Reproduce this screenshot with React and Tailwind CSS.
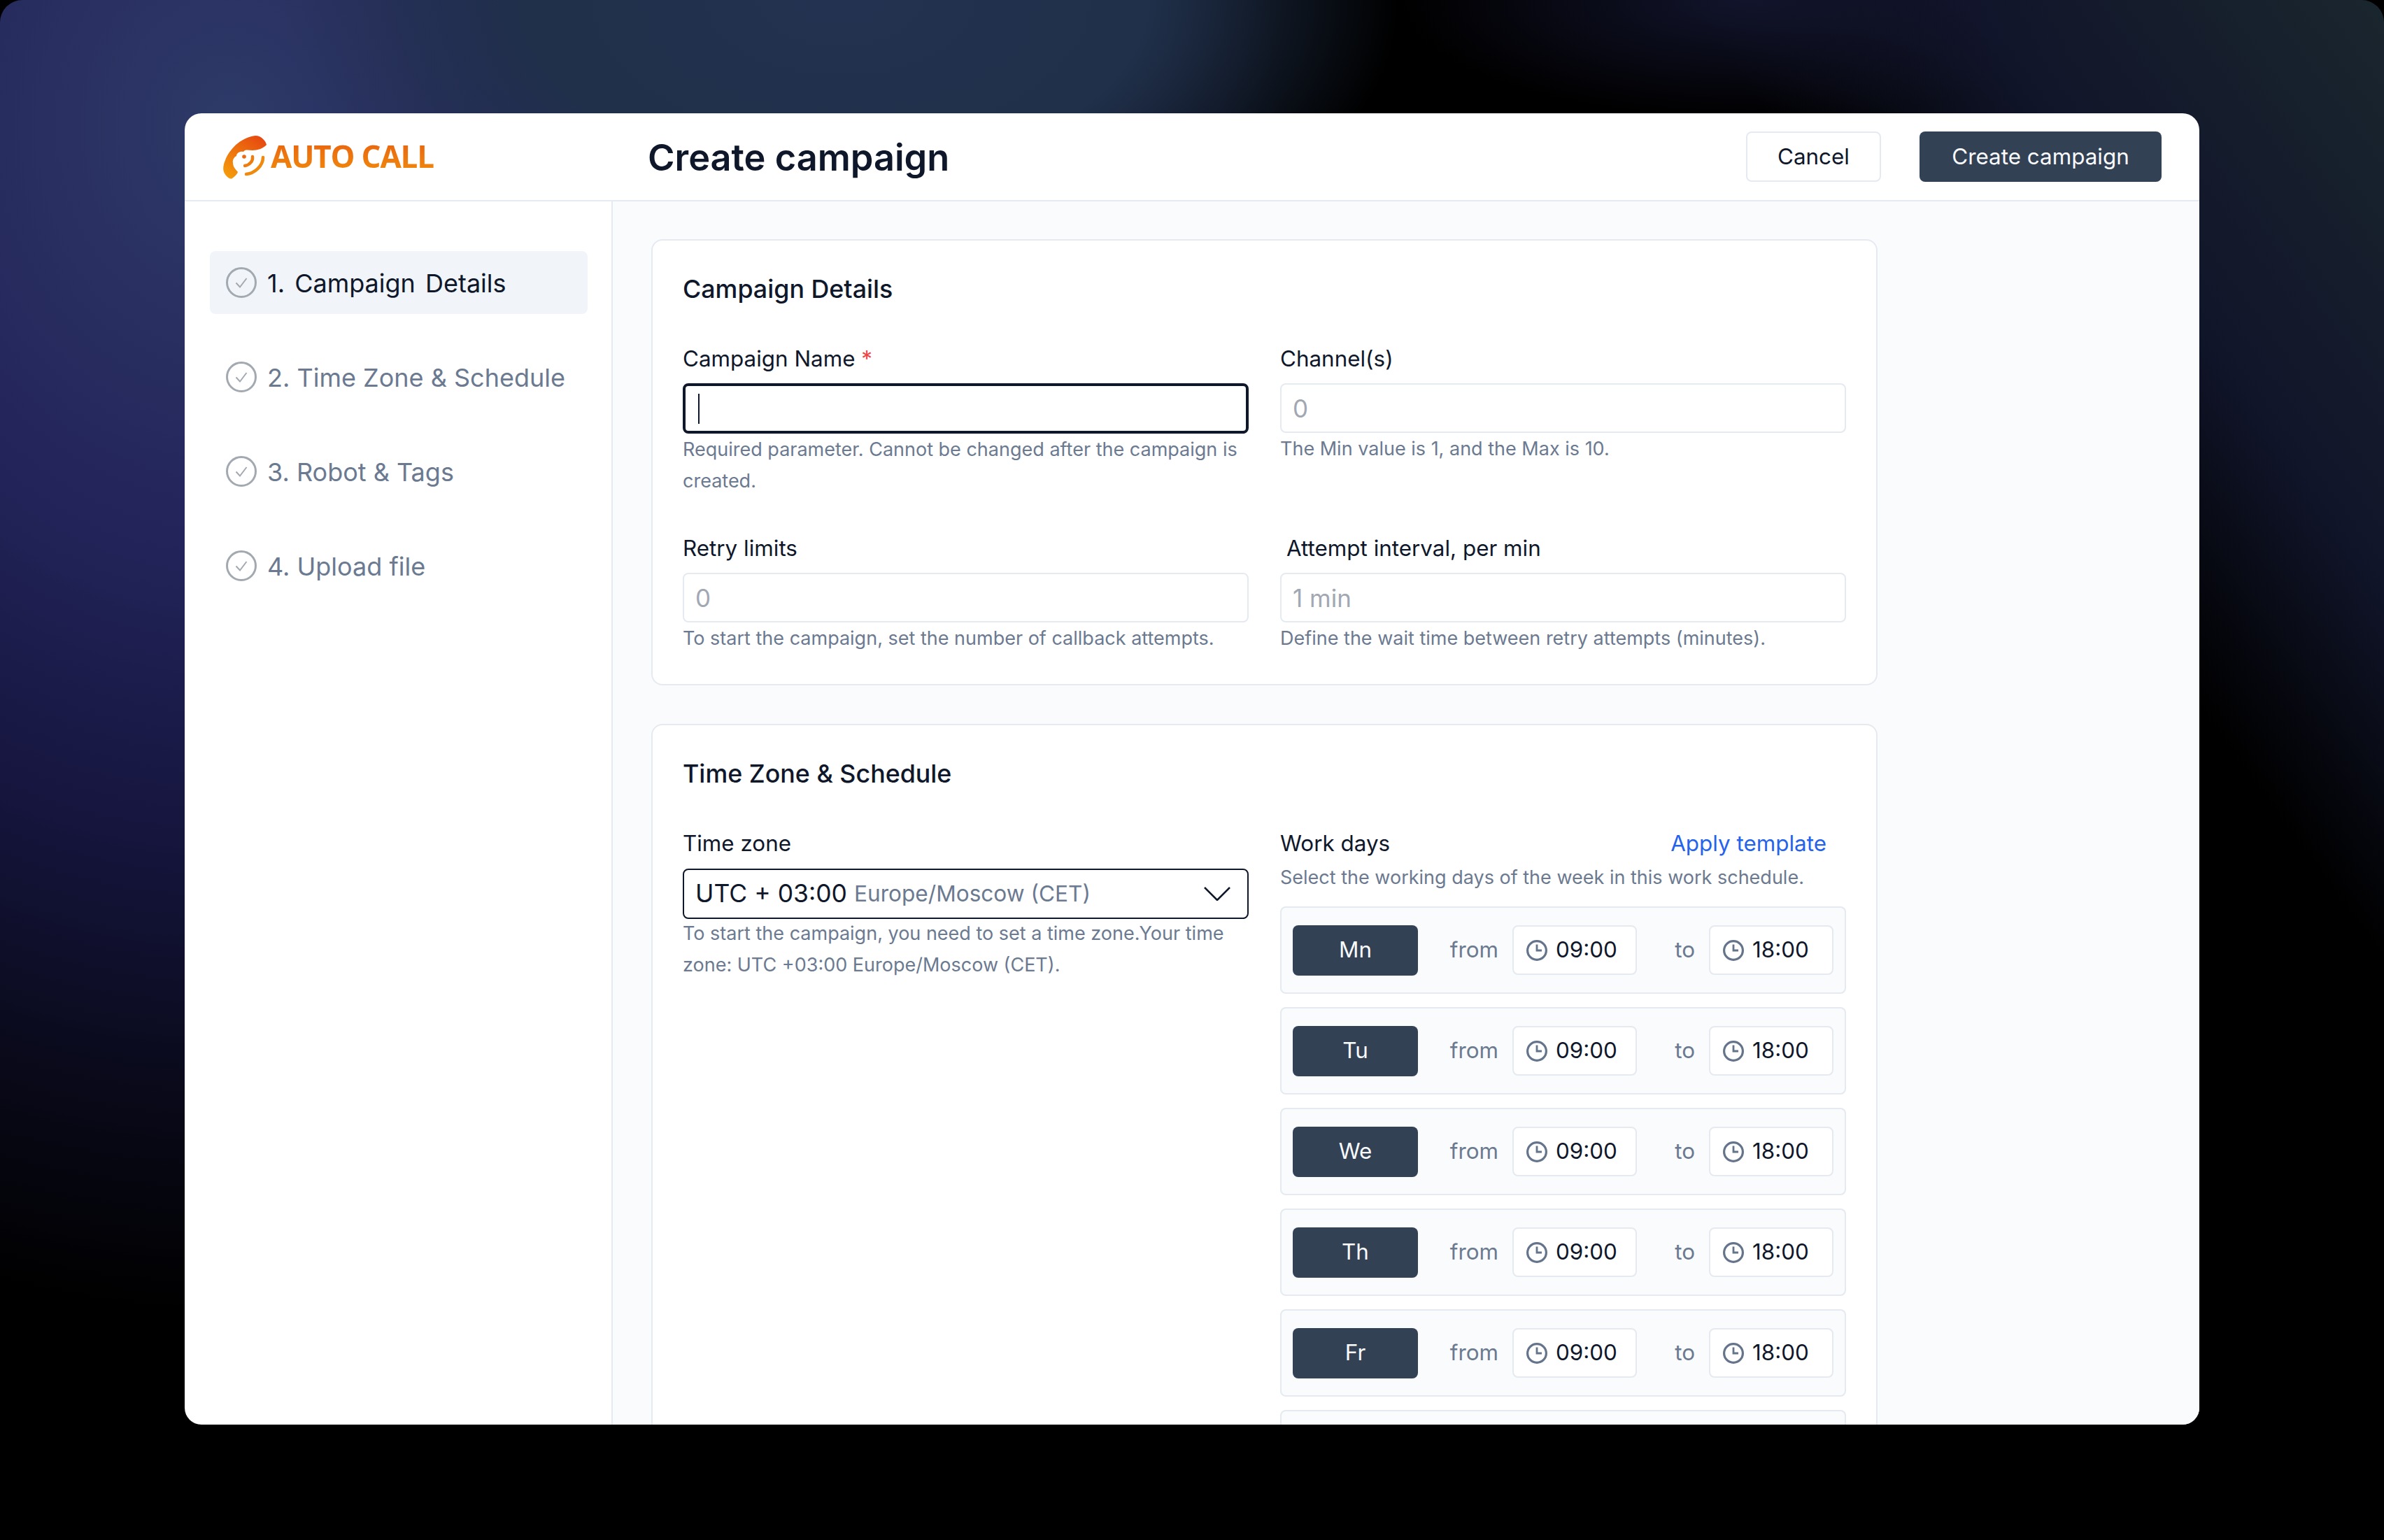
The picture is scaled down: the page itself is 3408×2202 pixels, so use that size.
const days = ['Mn', 'Tu', 'We', 'Th', 'Fr'];
const steps = ['1. Campaign Details', '2. Time Zone & Schedule', '3. Robot & Tags', '4. Upload file'];

function Logo() {
  return (
    <div className="flex items-center">
      <svg width="63" height="63" viewBox="0 0 63 63" className="shrink-0">
        <defs>
          <linearGradient id="logoGrad" x1="0.8" y1="0" x2="0.1" y2="1">
            <stop offset="0" stopColor="#e64a10" />
            <stop offset="1" stopColor="#f59e0b" />
          </linearGradient>
        </defs>
        <path
          d="M47 1C30 3 12 16 4 36C1 43 0 50 3 55C6 60 11 64 14 62C18 59 21 56 22 53C19 49 15 46 15 40C14 36 17 31 20 30C20 26 25 23 30 24C32 20 38 22 43 22C50 22 59 19 63 14C62 9 56 1 47 1Z"
          fill="url(#logoGrad)"
        />
        <circle cx="31" cy="31" r="2.8" fill="#ea6a12" />
        <path d="M43 31C44 37 39 43 32 44" fill="none" stroke="#ee7d10" strokeWidth="4.4" strokeLinecap="round" />
        <path d="M58 32C58 44 46 55 34 56" fill="none" stroke="#f08a0e" strokeWidth="4.6" strokeLinecap="round" />
      </svg>
      <span className="ml-[6px] -mt-[3px] font-[family-name:'Open_Sans',sans-serif] text-[44px] leading-[50px] font-bold tracking-[-1.2px] text-transparent bg-clip-text bg-gradient-to-b from-[#e8600f] to-[#f08a0c]">
        AUTO CALL
      </span>
    </div>
  );
}

function StepIcon() {
  return (
    <svg width="44" height="44" viewBox="0 0 44 44" fill="none" className="shrink-0">
      <circle cx="22" cy="22" r="20.5" stroke="#a3a9b1" strokeWidth="3" />
      <path d="M14.5 22.5L20 28.5L29.5 16" stroke="#a3a9b1" strokeWidth="2" />
    </svg>
  );
}

function ClockIcon() {
  return (
    <svg width="30" height="30" viewBox="0 0 30 30" fill="none" className="shrink-0">
      <circle cx="15" cy="15" r="13.4" stroke="#64748b" strokeWidth="3.2" />
      <path d="M15 6.5V15H22" stroke="#64748b" strokeWidth="2.8" />
    </svg>
  );
}

function Help({ children }) {
  return <p className="text-[27px] leading-[45px] text-[#6b7a90]">{children}</p>;
}

function Label({ children, className = '' }) {
  return <div className={`text-[31.4px] leading-[40px] text-[#0f172a] ${className}`}>{children}</div>;
}

function PlainInput({ placeholder }) {
  return (
    <div className="h-[71px] mt-[15px] rounded-[8px] border-2 border-[#e5eaf0] bg-white pl-[16px] pt-[1px] flex items-center text-[35px] text-[#a1a8b3]">
      {placeholder}
    </div>
  );
}

function TimeBox({ time }) {
  return (
    <div className="w-[178px] h-[71px] rounded-[8px] border-2 border-[#e5eaf0] bg-white pl-[18px] flex items-center gap-[12px] text-[31.4px] text-[#0f172a]">
      <ClockIcon />
      <span>{time}</span>
    </div>
  );
}

function DayRow({ day }) {
  return (
    <div className="h-[125px] shrink-0 rounded-[8px] border-2 border-[#e5eaf0] bg-[#f9fbfd] px-[16px] flex items-center text-[31.4px]">
      <div className="w-[179px] h-[72px] rounded-[8px] bg-[#334155] text-[#f8fafc] flex items-center justify-center">{day}</div>
      <div className="w-[135px] pr-[20px] text-right text-[#6b7a90]">from</div>
      <TimeBox time="09:00" />
      <div className="w-[103px] pr-[20px] text-right text-[#6b7a90]">to</div>
      <TimeBox time="18:00" />
    </div>
  );
}

export default function App() {
  return (
    <div className="w-[3408px] h-[2202px] bg-black overflow-hidden font-[family-name:Inter,sans-serif]">
      <div className="w-full h-full rounded-[32px] pt-[162px] bg-[radial-gradient(ellipse_800px_450px_at_1200px_0px,#223250_0%,#20304a_55%,transparent_100%),radial-gradient(ellipse_500px_170px_at_2500px_0px,#12142c_0%,transparent_100%),linear-gradient(54deg,transparent_80%,#11152a_88%,#1a262e_100%),radial-gradient(ellipse_1500px_1700px_at_330px_180px,#2d3a68_0%,#2a3162_15%,#23245a_35%,#15153e_60%,#0a0a1c_80%,transparent_100%)]">
        <div className="mx-auto w-[2880px] h-[1875px] rounded-[24px] overflow-hidden bg-white flex flex-col">
          {/* Header */}
          <header className="h-[126px] shrink-0 border-b-2 border-[#e5eaf0] flex items-center pr-[54px]">
            <div className="w-[662px] pl-[54px] shrink-0">
              <Logo />
            </div>
            <h1 className="pt-[3px] text-[52.3px] font-semibold text-[#0f172a] flex-1">Create campaign</h1>
            <button className="w-[193px] h-[72px] pt-[1px] rounded-[8px] border-2 border-[#e5eaf0] bg-white text-[31.4px] text-[#0f172a]">Cancel</button>
            <button className="ml-[55px] w-[346px] h-[72px] pt-[1px] rounded-[8px] bg-[#334155] text-[31.4px] text-[#f8fafc]">Create campaign</button>
          </header>

          <div className="flex flex-1 min-h-0">
            {/* Steps */}
            <aside className="w-[612px] shrink-0 border-r-2 border-[#e5eaf0] pl-[36px] pr-[34px] pt-[71px] flex flex-col gap-[45px]">
              {steps.map((s, i) => (
                <div key={s} className={`h-[90px] rounded-[8px] pl-[23px] flex items-center gap-[15px] text-[36px] ${i === 0 ? 'bg-[#f1f5f9] text-[#0f172a] [word-spacing:4px]' : 'text-[#6b7a90]'}`}>
                  <StepIcon />
                  <span className="pt-[1px]">{s}</span>
                </div>
              ))}
            </aside>

            {/* Form */}
            <main className="flex-1 min-w-0 bg-[#f9fbfd] pl-[55px] pt-[54px] flex flex-col gap-[55px] overflow-hidden">
              <section className="w-[1753px] shrink-0 rounded-[16px] border-2 border-[#e5eaf0] bg-white px-[43px] pt-[47px] pb-[43px]">
                <h2 className="text-[35.8px] leading-[44px] font-medium text-[#0f172a]">Campaign Details</h2>
                <div className="mt-[58px] grid grid-cols-2 gap-x-[45px] gap-y-[54px]">
                  <div>
                    <Label>Campaign Name <span className="text-[#ef4444]">*</span></Label>
                    <div className="h-[72px] mt-[15px] rounded-[8px] border-[4px] border-[#0f172a] bg-white pl-[18px] flex items-center">
                      <div className="w-[2px] h-[43px] bg-[#0f172a]"></div>
                    </div>
                    <Help>Required parameter. Cannot be changed after the campaign is created.</Help>
                  </div>
                  <div>
                    <Label>Channel(s)</Label>
                    <PlainInput placeholder="0" />
                    <Help>The Min value is 1, and the Max is 10.</Help>
                  </div>
                  <div>
                    <Label>Retry limits</Label>
                    <PlainInput placeholder="0" />
                    <Help>To start the campaign, set the number of callback attempts.</Help>
                  </div>
                  <div>
                    <Label className="pl-[9px]">Attempt interval, per min</Label>
                    <PlainInput placeholder="1 min" />
                    <Help>Define the wait time between retry attempts (minutes).</Help>
                  </div>
                </div>
              </section>

              <section className="w-[1753px] shrink-0 rounded-[16px] border-2 border-[#e5eaf0] bg-white px-[43px] pt-[47px] pb-[41px]">
                <h2 className="text-[35.8px] leading-[44px] font-medium text-[#0f172a]">Time Zone &amp; Schedule</h2>
                <div className="mt-[58px] grid grid-cols-2 gap-x-[45px]">
                  <div>
                    <Label>Time zone</Label>
                    <div className="h-[72px] mt-[16px] mb-[-2px] rounded-[8px] border-2 border-[#0f172a] bg-white pl-[16px] pr-[24px] flex items-center">
                      <span className="text-[35.5px] text-[#0f172a]">UTC + 03:00</span>
                      <span className="ml-[10px] text-[31.6px] text-[#6b7a90] flex-1">Europe/Moscow (CET)</span>
                      <svg width="38" height="20" viewBox="0 0 38 20" fill="none">
                        <path d="M1 1L19 19L37 1" stroke="#0f172a" strokeWidth="2.6" />
                      </svg>
                    </div>
                    <Help>To start the campaign, you need to set a time zone.Your time zone: UTC +03:00 Europe/Moscow (CET).</Help>
                  </div>
                  <div>
                    <div className="flex items-center justify-between pr-[28px]">
                      <Label>Work days</Label>
                      <a className="text-[31.4px] leading-[40px] text-[#2563eb]">Apply template</a>
                    </div>
                    <div className="mt-[6px]">
                      <Help>Select the working days of the week in this work schedule.</Help>
                    </div>
                    <div className="mt-[19px] flex flex-col gap-[19px]">
                      {days.map(d => <DayRow key={d} day={d} />)}
                      <div className="h-[125px] shrink-0 rounded-[8px] border-2 border-[#e5eaf0] bg-[#f9fbfd]"></div>
                    </div>
                  </div>
                </div>
              </section>
            </main>
          </div>
        </div>
      </div>
    </div>
  );
}
